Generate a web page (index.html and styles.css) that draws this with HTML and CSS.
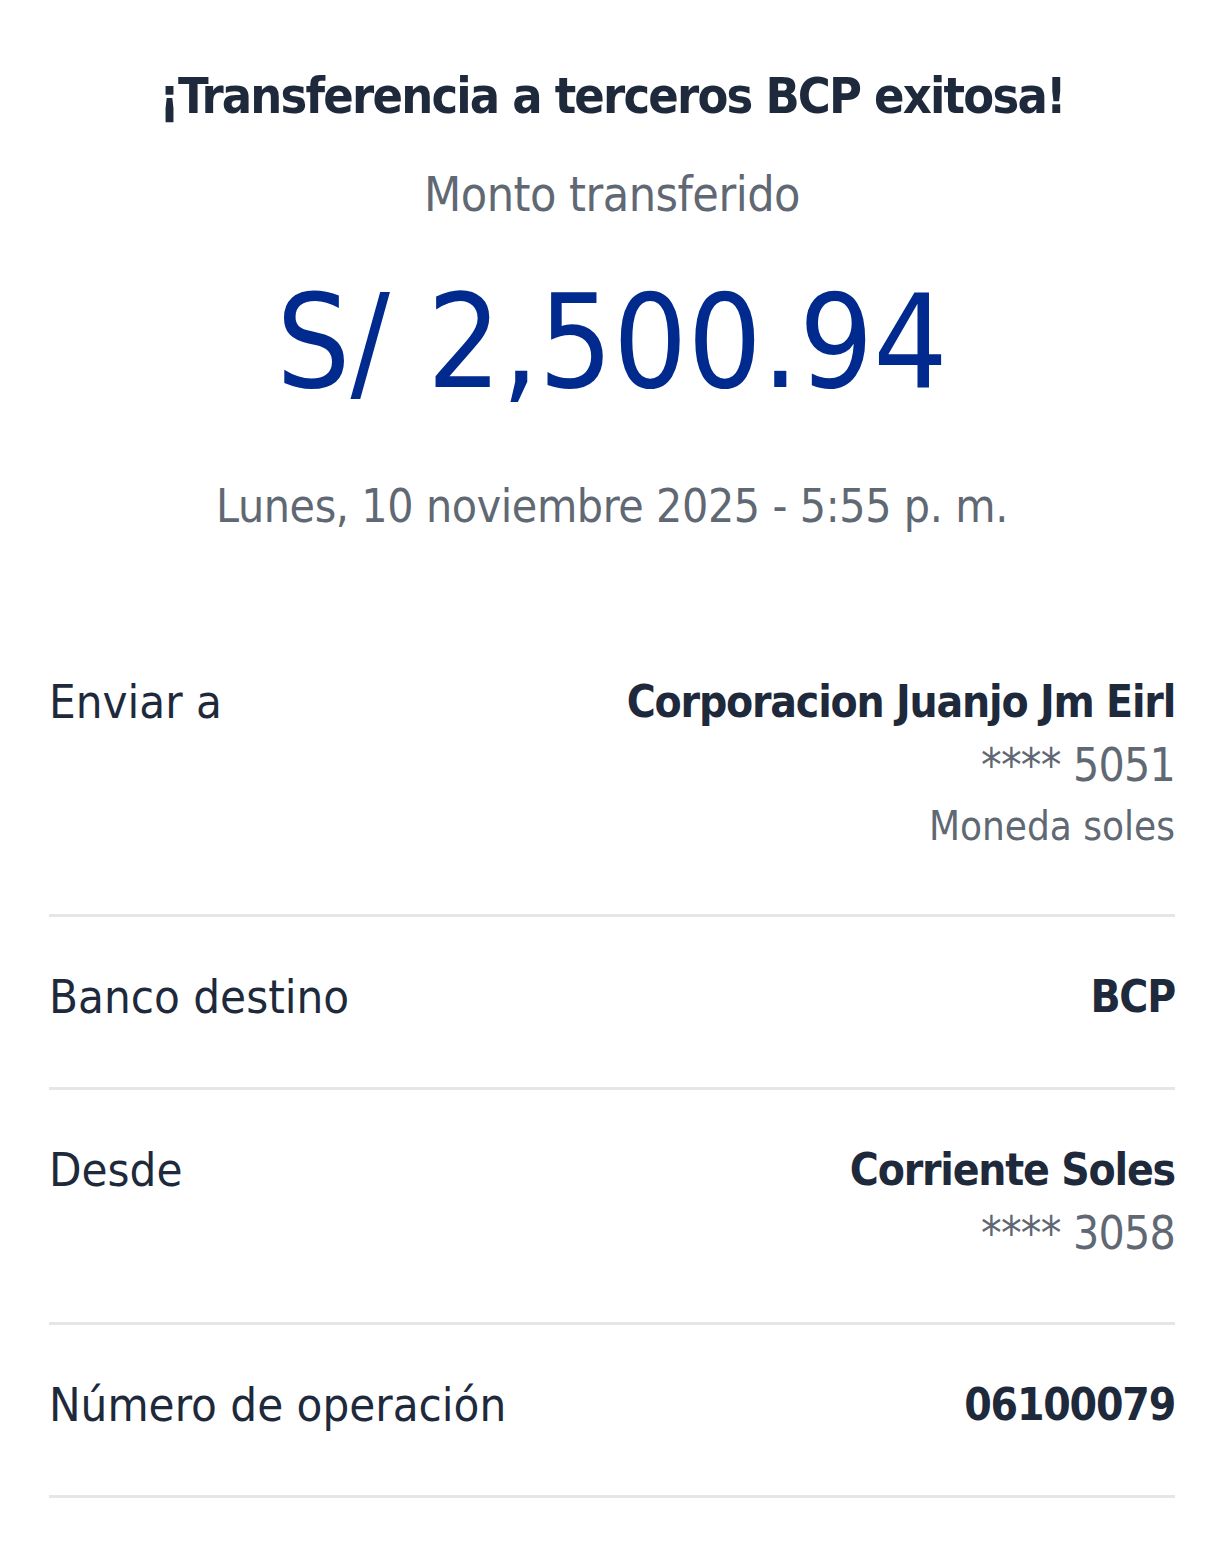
FILE: index.html
```html
<!DOCTYPE html>
<html lang="es">
<head>
<meta charset="utf-8">
<title>Transferencia exitosa</title>
<link rel="stylesheet" href="styles.css">
</head>
<body>
<main class="receipt">
  <header class="summary">
    <h1 class="title">¡Transferencia a terceros BCP exitosa!</h1>
    <p class="label">Monto transferido</p>
    <p class="amount">S/ 2,500.94</p>
    <p class="date">Lunes, 10 noviembre 2025 - 5:55 p. m.</p>
  </header>
  <section class="details">
    <div class="row">
      <span class="key">Enviar a</span>
      <div class="val">
        <span class="strong">Corporacion Juanjo Jm Eirl</span>
        <span class="muted">**** 5051</span>
        <span class="small">Moneda soles</span>
      </div>
    </div>
    <div class="row">
      <span class="key">Banco destino</span>
      <div class="val">
        <span class="strong">BCP</span>
      </div>
    </div>
    <div class="row">
      <span class="key">Desde</span>
      <div class="val">
        <span class="strong">Corriente Soles</span>
        <span class="muted">**** 3058</span>
      </div>
    </div>
    <div class="row">
      <span class="key">Número de operación</span>
      <div class="val">
        <span class="strong">06100079</span>
      </div>
    </div>
  </section>
</main>
</body>
</html>
```
FILE: styles.css
```css
html, body {
  margin: 0;
  padding: 0;
  background: #ffffff;
}
body {
  font-family: "DejaVu Sans Condensed", "Liberation Sans", sans-serif;
  color: #1e2a3b;
}
.receipt {
  padding: 0 49px;
}
.summary {
  text-align: center;
  padding-top: 64px;
  padding-bottom: 86px;
}
.summary p, .summary h1 {
  margin: 0;
}
.title {
  font-size: 50px;
  font-weight: 600;
  letter-spacing: -1.8px;
  line-height: 64px;
  color: #1e2a3b;
}
.summary .label {
  margin-top: 36px;
  font-size: 48px;
  letter-spacing: -0.5px;
  line-height: 60px;
  color: #5f6873;
}
.summary .amount {
  margin-top: 43px;
  font-size: 130px;
  line-height: 150px;
  color: #002a8d;
}
.summary .date {
  margin-top: 59px;
  font-size: 46px;
  letter-spacing: -0.4px;
  line-height: 60px;
  color: #5f6873;
}
.row {
  display: flex;
  justify-content: space-between;
  align-items: flex-start;
  padding: 48px 0 58px;
  border-bottom: 3px solid #e6e6e6;
}
.key {
  font-size: 47px;
  line-height: 64px;
  color: #1e2a3b;
}
.val {
  display: flex;
  flex-direction: column;
  align-items: flex-end;
  text-align: right;
}
.strong {
  font-size: 44px;
  letter-spacing: -1.2px;
  line-height: 64px;
  font-weight: 600;
  color: #1e2a3b;
}
.muted {
  font-size: 46px;
  letter-spacing: -0.8px;
  line-height: 62px;
  color: #5f6873;
}
.small {
  font-size: 40px;
  line-height: 60px;
  color: #5f6873;
}
```
